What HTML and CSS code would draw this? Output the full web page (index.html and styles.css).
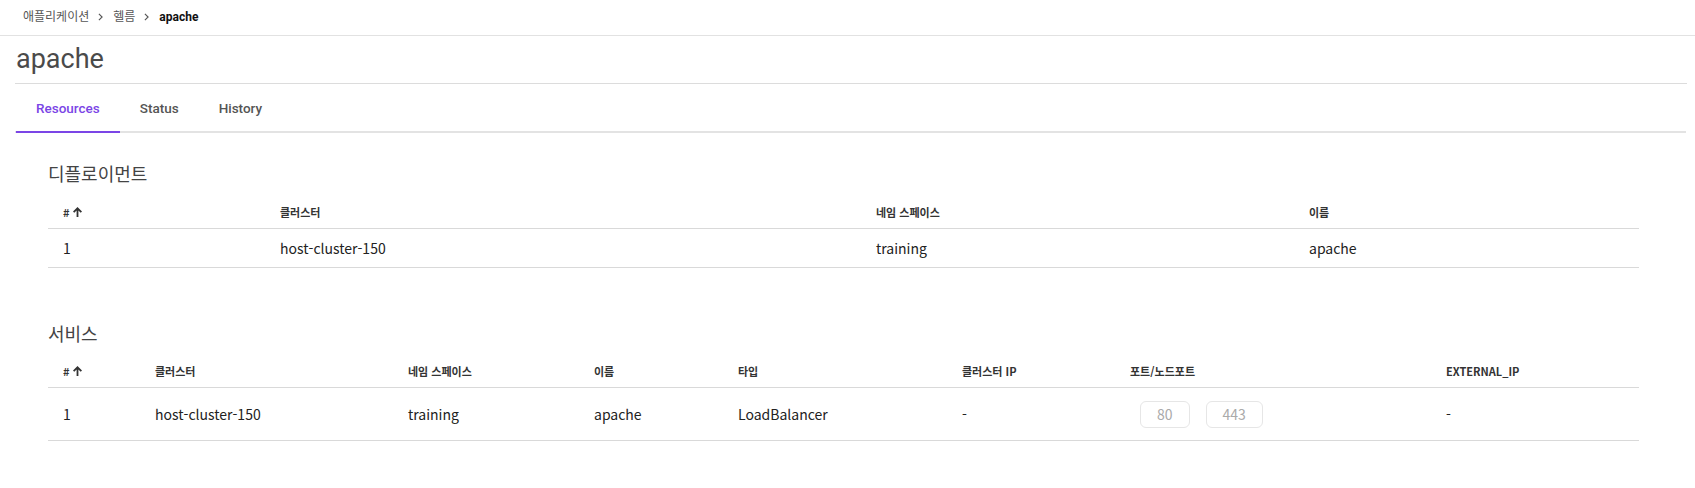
FILE: index.html
```html
<!DOCTYPE html>
<html lang="ko">
<head>
<meta charset="utf-8">
<title>apache</title>
<link rel="stylesheet" href="styles.css">
</head>
<body>
<nav class="breadcrumb">
  <span class="crumb">애플리케이션</span>
  <svg class="chev" viewBox="0 0 6 10" width="6" height="10"><path d="M1 1l4 4-4 4" fill="none" stroke="#555" stroke-width="1.4"/></svg>
  <span class="crumb">헬름</span>
  <svg class="chev" viewBox="0 0 6 10" width="6" height="10"><path d="M1 1l4 4-4 4" fill="none" stroke="#555" stroke-width="1.4"/></svg>
  <span class="crumb current">apache</span>
</nav>
<main class="page">
  <h1 class="title">apache</h1>
  <div class="tabs">
    <div class="tab active">Resources</div>
    <div class="tab">Status</div>
    <div class="tab">History</div>
  </div>

  <section class="section first">
    <h2 class="section-title">디플로이먼트</h2>
    <div class="table cols-deploy">
      <div class="row head">
        <div class="cell">#<svg class="sort" viewBox="0 0 10 11" width="9" height="10"><path d="M5 0L10 5 8.6 6.4 6 3.8V11H4V3.8L1.4 6.4 0 5Z" fill="#333"/></svg></div>
        <div class="cell">클러스터</div>
        <div class="cell">네임 스페이스</div>
        <div class="cell">이름</div>
      </div>
      <div class="row body">
        <div class="cell">1</div>
        <div class="cell">host-cluster-150</div>
        <div class="cell">training</div>
        <div class="cell">apache</div>
      </div>
    </div>
  </section>

  <section class="section second">
    <h2 class="section-title">서비스</h2>
    <div class="table cols-svc">
      <div class="row head">
        <div class="cell">#<svg class="sort" viewBox="0 0 10 11" width="9" height="10"><path d="M5 0L10 5 8.6 6.4 6 3.8V11H4V3.8L1.4 6.4 0 5Z" fill="#333"/></svg></div>
        <div class="cell">클러스터</div>
        <div class="cell">네임 스페이스</div>
        <div class="cell">이름</div>
        <div class="cell">타입</div>
        <div class="cell">클러스터 IP</div>
        <div class="cell">포트/노드포트</div>
        <div class="cell">EXTERNAL_IP</div>
      </div>
      <div class="row body tall">
        <div class="cell">1</div>
        <div class="cell">host-cluster-150</div>
        <div class="cell">training</div>
        <div class="cell">apache</div>
        <div class="cell">LoadBalancer</div>
        <div class="cell">-</div>
        <div class="cell ports"><span class="port">80</span><span class="port">443</span></div>
        <div class="cell">-</div>
      </div>
    </div>
  </section>
</main>
</body>
</html>
```

FILE: styles.css
```css
* { box-sizing: border-box; }
html, body { margin: 0; padding: 0; background: #fff; }
body {
  font-family: Roboto, "Noto Sans CJK KR", sans-serif;
  color: #333;
}

.breadcrumb {
  height: 36px;
  display: flex;
  align-items: center;
  padding: 0 0 1px 23px;
  border-bottom: 1px solid #e2e2e2;
  font-size: 12px;
  color: #555;
}
.crumb { line-height: 16px; }
.crumb.current { color: #111; font-weight: 700; }
.chev { margin: 0 10px 0 9px; width: 5px; height: 8px; }

.page { padding: 0 8px 0 15px; }

.title {
  margin: 0;
  height: 48px;
  display: flex;
  align-items: center;
  font-size: 27px;
  font-weight: 400;
  color: #4a4a4a;
  padding-left: 1px;
  padding-bottom: 1px;
  border-bottom: 1px solid #dcdcdc;
}

.tabs {
  display: flex;
  border-bottom: 2px solid #e3e3e3;
  margin-right: 1px;
  padding-left: 1px;
}
.tab {
  height: 47px;
  margin-bottom: -2px;
  padding: 0 20px;
  display: flex;
  align-items: center;
  font-size: 13.5px;
  font-weight: 500;
  color: #555;
  border-bottom: 2px solid transparent;
  box-sizing: content-box;
}
.tab.active { color: #7b45e6; border-bottom-color: #7b45e6; }

.section { padding: 0 48px 0 33px; }
.section.first { padding-top: 28px; }
.section.second { padding-top: 53px; }

.section-title {
  margin: 0 0 9px;
  font-family: "Noto Sans CJK KR", sans-serif;
  font-size: 18px;
  line-height: 24px;
  font-weight: 400;
  color: #444;
}
.section.second .section-title { margin-bottom: 8px; }

.table { display: grid; font-family: "Noto Sans CJK KR", sans-serif; }
.row { display: grid; grid-template-columns: subgrid; grid-column: 1 / -1; align-items: center; border-bottom: 1px solid #d9d9d9; }
.cols-deploy { grid-template-columns: 217px 596px 433px 1fr; }
.cols-svc { grid-template-columns: 92px 253px 186px 144px 224px 168px 316px 1fr; }

.cell { padding-left: 15px; display: flex; align-items: center; }

.row.head { height: 35px; font-size: 11px; font-weight: 700; color: #333; padding-top: 2px; }
.row.body { height: 39px; font-size: 14px; color: #222; }
.row.body.tall { height: 53px; }

.sort { margin-left: 3px; }

.ports { gap: 16px; padding-left: 25px; }
.port {
  height: 27px;
  padding: 0 16px;
  display: flex;
  align-items: center;
  border: 1px solid #e6e6e6;
  border-radius: 6px;
  color: #aaa;
  font-size: 14px;
}
```
